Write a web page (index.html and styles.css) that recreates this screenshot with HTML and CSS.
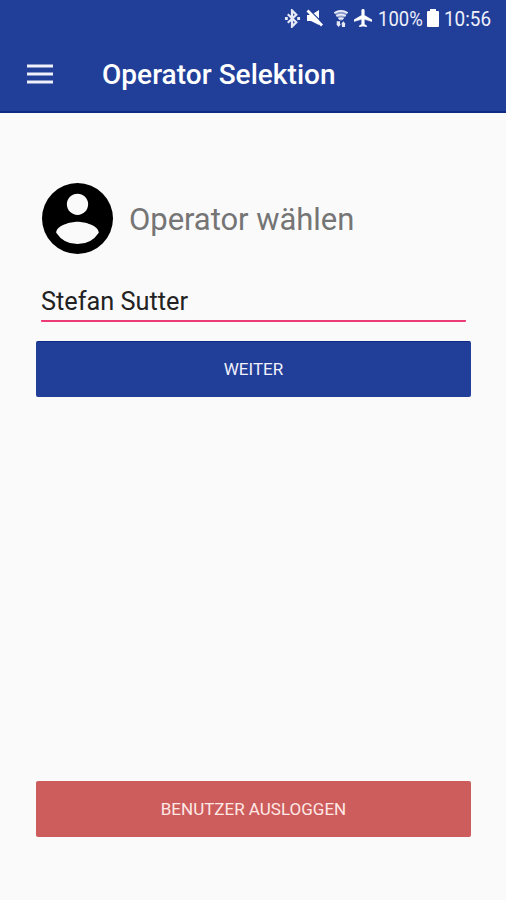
FILE: index.html
```html
<!DOCTYPE html>
<html lang="de">
<head>
<meta charset="utf-8">
<title>Operator Selektion</title>
<link rel="stylesheet" href="styles.css">
</head>
<body>
<header class="header">
  <div class="status">
    <svg class="bluetooth" viewBox="0 0 18 20"><path d="M4 5.500 13 14l-4.500 4.500V1.500L13 6 4 14.500" fill="none" stroke="#e6e8f6" stroke-width="2.400"/><path d="M1 8.500h3v3H1zM14 8.500h3v3h-3z" fill="#e6e8f6"/></svg>
    <svg class="muted" viewBox="0 0 17 18"><path d="M1 6h4l8-5v15l-8-4H1z" fill="#fff"/><path d="M3.500 1 17 14.500" stroke="#213f99" stroke-width="1.300"/><path d="M1.500 1.500 16 16.500" stroke="#fff" stroke-width="2.800"/></svg>
    <svg class="wifi" viewBox="0 0 16 20"><path d="M1 4Q8-1 15 4L9 12H7z" fill="#8f9dcc"/><path d="M1 4.200Q8-.5 15 4.200M3 7.500q5-3 10 0M5.500 10.500q2.500-1.500 5 0" fill="none" stroke="#eef0fa" stroke-width="1.800"/><path d="M3.500 13h3.500v3H8l-2.500 3L3 16h.5zM9 19v-3H8l2.500-3 2.500 3h-.8v3z" fill="#e6e8f6"/></svg>
    <svg class="plane" viewBox="2 2 20 20"><path d="M22 16v-2l-8.500-5V3.500a1.500 1.500 0 0 0-3 0V9L2 14v2l8.500-2.500V19L8 20.500V22l4-1 4 1v-1.500L13.500 19v-5.500z" fill="#fff" stroke="#fff" stroke-width=".5"/></svg>
    <span class="percent">100%</span>
    <svg class="battery" viewBox="0 0 12 18"><path d="M3 0h6v2h2q1 0 1 1v14q0 1-1 1H1q-1 0-1-1V3q0-1 1-1h2z" fill="#fff"/></svg>
    <span class="clock">10:56</span>
  </div>
  <div class="toolbar">
    <svg class="menu" viewBox="0 0 26 20"><path d="M0 2h26M0 10h26M0 18h26" stroke="#f0f0fa" stroke-width="2.800"/></svg>
    <h1 class="title">Operator Selektion</h1>
  </div>
</header>
<main class="content">
  <div class="heading">
    <svg class="avatar" viewBox="2 2 20 20"><path d="M12 2a10 10 0 1 0 0 20 10 10 0 0 0 0-20zm0 3a3 3 0 1 1 0 6 3 3 0 0 1 0-6zm0 14.200a7.200 7.200 0 0 1-6-3.220c.03-1.990 4-3.080 6-3.080s5.970 1.090 6 3.080a7.200 7.200 0 0 1-6 3.220z"/></svg>
    <h2 class="prompt">Operator wählen</h2>
  </div>
  <div class="field"><span class="value">Stefan Sutter</span></div>
  <button class="button next"><span>WEITER</span></button>
  <button class="button logout"><span>BENUTZER AUSLOGGEN</span></button>
</main>
</body>
</html>
```

FILE: styles.css
```css
* { box-sizing: border-box; }
body {
  margin: 0;
  height: 900px;
  display: flex;
  flex-direction: column;
  background: #fafafa;
  font-family: Roboto, sans-serif;
}
svg { display: block; flex: none; }
.header {
  height: 113px;
  background: #213f99;
  border-bottom: 2px solid #102a83;
  color: #fff;
}
.status {
  height: 36px;
  display: flex;
  align-items: center;
  padding-left: 284px;
  font-size: 21px;
  line-height: 36px;
  color: #f0f0fb;
}
.bluetooth { width: 17px; height: 19px; }
.muted { width: 17px; height: 18px; margin-left: 5px; }
.wifi { width: 16px; height: 19px; margin-left: 10px; }
.plane { width: 18px; height: 18px; margin-left: 5px; }
.percent, .clock { transform: scaleX(.88); transform-origin: left; white-space: nowrap; }
.percent { width: 44px; margin: 1px 0 0 6px; }
.battery { width: 12px; height: 18px; margin-left: 5px; }
.clock { width: 50px; margin: 1px 0 0 5px; transform: scaleX(.9); }
.toolbar {
  height: 75px;
  display: flex;
  align-items: center;
  padding-left: 27px;
}
.menu { width: 26px; height: 20px; }
.title {
  margin: 2px 0 0 49px;
  font-size: 28px;
  font-weight: 500;
  letter-spacing: .04px;
  white-space: nowrap;
}
.content {
  flex: 1;
  display: flex;
  flex-direction: column;
  padding: 70px 35px 63px 36px;
}
.heading { display: flex; align-items: center; height: 71px; padding-left: 6px; }
.avatar { width: 71px; height: 71px; }
.prompt {
  margin: 2px 0 0 16px;
  font-size: 31px;
  font-weight: 400;
  letter-spacing: -.05px;
  color: #757575;
  white-space: nowrap;
}
.field {
  height: 38px;
  margin: 30px 5px 0;
  padding-top: 3px;
  border-bottom: 2px solid #ed3b77;
  border-radius: 1px;
  color: #222;
  font-size: 25.300px;
  line-height: 30px;
}
.button {
  height: 56px;
  border: 0;
  border-radius: 2px;
  font: 400 17px/55px Roboto, sans-serif;
  color: #f1f1fc;
  padding: 0;
}
.next { margin-top: 19px; background: #213f99; border-top: 1px solid #102a83; }
.logout { margin-top: auto; background: #cd5c5c; color: #ffe8e5; line-height: 56px; }
```
